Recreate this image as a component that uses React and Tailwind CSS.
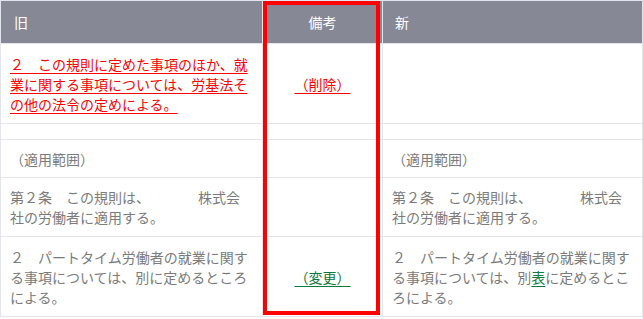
import React from "react";

const GRAY = "text-[#7b7b7b]";

const Del = ({ children }) => (
  <span className="text-[#ff0000] underline decoration-[#ff0000] underline-offset-[3px]">{children}</span>
);

const Chg = ({ children }) => (
  <span className="text-[#0b7a3e] underline decoration-[#0b7a3e] underline-offset-[3px]">{children}</span>
);

const rows = [
  {
    h: "h-[80px]",
    old: <Del>２　この規則に定めた事項のほか、就業に関する事項については、労基法その他の法令の定めによる。</Del>,
    note: <Del>（削除）</Del>,
    next: null,
  },
  { h: "h-[16px]", old: null, note: null, next: null },
  {
    h: "h-[38px]",
    old: <span className={GRAY}>（適用範囲）</span>,
    note: null,
    next: <span className={GRAY}>（適用範囲）</span>,
  },
  {
    h: "h-[59px]",
    old: (
      <span className={GRAY}>
        第２条　この規則は、<span className="inline-block w-[48px]" />株式会社の労働者に適用する。
      </span>
    ),
    note: null,
    next: (
      <span className={GRAY}>
        第２条　この規則は、<span className="inline-block w-[48px]" />株式会社の労働者に適用する。
      </span>
    ),
  },
  {
    h: "h-[80px]",
    old: <span className={GRAY}>２　パートタイム労働者の就業に関する事項については、別に定めるところによる。</span>,
    note: <Chg>（変更）</Chg>,
    next: (
      <span className={GRAY}>
        ２　パートタイム労働者の就業に関する事項については、別<Chg>表</Chg>に定めるところによる。
      </span>
    ),
  },
];

export default function App() {
  return (
    <div className="relative w-[643px] h-[319px] bg-white" style={{ fontFamily: '"Noto Sans CJK JP", "Noto Sans", sans-serif' }}>
      <table className="w-[642px] border-collapse table-fixed text-[14px] leading-[20px]">
        <colgroup>
          <col className="w-[262px]" />
          <col className="w-[120px]" />
          <col className="w-[260px]" />
        </colgroup>
        <thead>
          <tr className="h-[43px] bg-[#878896] text-white">
            <th className="border border-[#e4e4ef] px-[13px] text-left font-normal">旧</th>
            <th className="border border-[#e4e4ef] text-center font-normal">備考</th>
            <th className="border border-[#e4e4ef] px-[12px] text-left font-normal">新</th>
          </tr>
        </thead>
        <tbody>
          {rows.map((r, i) => (
            <tr key={i} className={r.h}>
              <td className="border border-[#e4e4ef] px-[9px] py-0 align-middle">{r.old}</td>
              <td className="border border-[#e4e4ef] px-0 py-0 text-center align-middle">{r.note}</td>
              <td className="border border-[#e4e4ef] px-[9px] py-0 align-middle">{r.next}</td>
            </tr>
          ))}
        </tbody>
      </table>
      <div className="absolute left-[263px] top-[1px] w-[117px] h-[314px] border-4 border-[#ff0000] pointer-events-none" />
    </div>
  );
}
